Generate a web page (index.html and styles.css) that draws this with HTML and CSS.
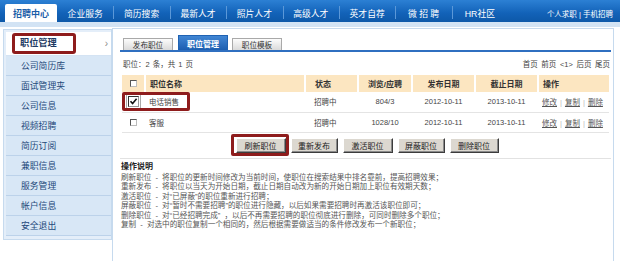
FILE: index.html
```html
<!DOCTYPE html>
<html lang="zh-CN">
<head>
<meta charset="utf-8">
<title>招聘中心 - 职位管理</title>
<link rel="stylesheet" href="styles.css">
</head>
<body>
<header class="top">
  <nav class="nav">
    <a class="nav-home">招聘中心</a>
    <a class="nav-item">企业服务</a>
    <a class="nav-item">简历搜索</a>
    <a class="nav-item">最新人才</a>
    <a class="nav-item">照片人才</a>
    <a class="nav-item">高级人才</a>
    <a class="nav-item">英才自荐</a>
    <a class="nav-item">微 招 聘</a>
    <a class="nav-item">HR社区</a>
    <div class="nav-right">个人求职 | 手机招聘</div>
  </nav>
  <div class="band"></div>
</header>
<div class="page">
  <aside class="side">
    <div class="side-item active"><span class="mark">职位管理</span><span class="arrow">›</span></div>
    <div class="side-item">公司简历库</div>
    <div class="side-item">面试管理夹</div>
    <div class="side-item">公司信息</div>
    <div class="side-item">视频招聘</div>
    <div class="side-item">简历订阅</div>
    <div class="side-item">兼职信息</div>
    <div class="side-item">服务管理</div>
    <div class="side-item">帐户信息</div>
    <div class="side-item">安全退出</div>
  </aside>
  <main class="panel">
    <div class="tabs">
      <div class="tab">发布职位</div>
      <div class="tab on">职位管理</div>
      <div class="tab">职位模板</div>
    </div>
    <div class="info">
      <span class="count">职位：2 条，共 1 页</span>
      <span class="pager">首页 前页 &lt;1&gt; 后页 尾页</span>
    </div>
    <table class="grid">
      <colgroup>
        <col class="c-cb"><col class="c-name"><col class="c-st"><col class="c-vw"><col class="c-d"><col class="c-d"><col class="c-op">
      </colgroup>
      <thead>
        <tr>
          <th class="cbcell"><span class="cb"></span></th>
          <th class="left">职位名称</th>
          <th class="left st">状态</th>
          <th>浏览/应聘</th>
          <th>发布日期</th>
          <th>截止日期</th>
          <th class="left">操作</th>
        </tr>
      </thead>
      <tbody>
        <tr>
          <td class="cbcell rel"><span class="cb checked"><svg viewBox="0 0 9 9" width="9" height="9"><path d="M1.5 4.2 L3.6 6.6 L7.6 1.8" fill="none" stroke="#111" stroke-width="1.6"/></svg></span><div class="rowmark"></div></td>
          <td class="left">电话销售</td>
          <td class="left st">招聘中</td>
          <td>804/3</td>
          <td>2012-10-11</td>
          <td>2013-10-11</td>
          <td class="left ops"><a>修改</a><i>|</i><a>复制</a><i>|</i><a>删除</a></td>
        </tr>
        <tr>
          <td class="cbcell"><span class="cb"></span></td>
          <td class="left">客服</td>
          <td class="left st">招聘中</td>
          <td>1028/10</td>
          <td>2012-10-11</td>
          <td>2013-10-11</td>
          <td class="left ops"><a>修改</a><i>|</i><a>复制</a><i>|</i><a>删除</a></td>
        </tr>
      </tbody>
    </table>
    <div class="btns">
      <span class="hl"><button class="btn w50">刷新职位</button></span>
      <button class="btn w46">重新发布</button>
      <button class="btn w50">激活职位</button>
      <button class="btn w46">屏蔽职位</button>
      <button class="btn w49">删除职位</button>
    </div>
    <div class="help">
      <div class="help-title">操作说明</div>
      <p>刷新职位 - 将职位的更新时间修改为当前时间，使职位在搜索结果中排名靠前，提高招聘效果；</p>
      <p>重新发布 - 将职位以当天为开始日期，截止日期自动改为新的开始日期加上职位有效期天数；</p>
      <p>激活职位 - 对“已屏蔽”的职位重新进行招聘；</p>
      <p>屏蔽职位 - 对“暂时不需要招聘”的职位进行隐藏，以后如果需要招聘时再激活该职位即可；</p>
      <p>删除职位 - 对“已经招聘完成” ，以后不再需要招聘的职位彻底进行删除，可同时删除多个职位；</p>
      <p>复制 - 对选中的职位复制一个相同的，然后根据需要做适当的条件修改发布一个新职位；</p>
    </div>
  </main>
</div>
</body>
</html>
```

FILE: styles.css
```css
* { box-sizing: border-box; margin: 0; padding: 0; }
html, body { width: 620px; height: 261px; overflow: hidden; background: #fff; }
body {
  font-family: "Liberation Sans", "Noto Sans CJK SC", sans-serif;
  font-size: 8px;
  color: #333;
}

/* top navigation */
.nav {
  height: 22px;
  display: flex;
  align-items: flex-end;
  padding-left: 5px;
  background: linear-gradient(#2c80d4, #1262b8 60%, #0d58a8);
}
.nav-home {
  width: 52px;
  height: 18px;
  background: #fff;
  color: #1b5ea8;
  font-weight: bold;
  font-size: 9px;
  display: flex;
  align-items: center;
  justify-content: center;
  border-radius: 2px 2px 0 0;
}
.nav-item {
  width: 56.4px;
  height: 18px;
  display: flex;
  align-items: center;
  justify-content: center;
  color: #fff;
  font-size: 8.8px;
  position: relative;
}
.nav-item + .nav-item::before {
  content: "";
  position: absolute;
  left: 0;
  top: 2px;
  height: 13px;
  border-left: 1px solid #5b98d8;
}
.nav-right {
  margin-left: auto;
  height: 18px;
  padding-right: 7px;
  display: flex;
  align-items: center;
  color: #fff;
  font-size: 7.5px;
}
.band { height: 5px; background: #d2e3f4; }

/* page */
.page {
  display: flex;
  align-items: flex-start;
  margin-top: 1px;
}

/* sidebar */
.side {
  width: 109px;
  margin: 1px 0 0 3px;
  background: #e4eef9;
  border: 1px solid #c6daee;
  padding: 2px 0 3px 2px;
}
.side-item {
  height: 20px;
  display: flex;
  align-items: center;
  padding-left: 15px;
  font-size: 8.8px;
  color: #24497a;
  background: #d8e7f6;
  border-bottom: 1px solid #bcd2ea;
}
.side-item.active {
  height: 24px;
  background: #fff;
  padding-left: 6px;
  padding-right: 3px;
  justify-content: space-between;
  border-bottom: 1px solid #d4e3f3;
}
.mark {
  display: inline-block;
  height: 21px;
  line-height: 15px;
  padding: 0 16px 0 5px;
  border: 3px solid #8e1c1c;
  border-radius: 3px;
  font-weight: bold;
  font-size: 9.2px;
  color: #1d3a63;
}
.arrow { color: #8a8a8a; font-size: 10px; }

/* main panel */
.panel {
  width: 502px;
  height: 240px;
  border: 1px solid #c6daee;
  border-bottom: none;
  padding: 6px 2px 0 7px;
}
.tabs {
  display: flex;
  align-items: flex-end;
  height: 17px;
  padding-left: 3px;
  border-bottom: 2px solid #2f6fc0;
}
.tab {
  width: 50px;
  height: 12px;
  margin-right: 5px;
  border: 1px solid #a9a9a9;
  border-bottom: none;
  background: linear-gradient(#fcfcfc, #dadada);
  display: flex;
  align-items: center;
  justify-content: center;
  font-size: 7.6px;
  color: #333;
}
.tab.on {
  height: 15px;
  margin-right: 4px;
  border-color: #1f62b3;
  background: linear-gradient(#4186d4, #1c5eb0);
  color: #fff;
  font-weight: bold;
  font-size: 8px;
}
.info {
  margin-top: 4px;
  height: 14px;
  display: flex;
  align-items: center;
  justify-content: space-between;
  padding: 0 1px 0 3px;
  font-size: 7.5px;
  color: #444;
}
.count { word-spacing: 1px; }
.pager { word-spacing: 1.5px; }

/* table */
.grid {
  margin: 5px 0 0 2px;
  width: 487px;
  border-collapse: collapse;
  table-layout: fixed;
}
.c-cb { width: 23px; }
.c-name { width: 160px; }
.c-st { width: 53px; }
.c-vw { width: 54px; }
.c-d { width: 63px; }
.c-op { width: 71px; }
.grid th {
  height: 17px;
  background: #fce6c1;
  border-right: 2px solid #fff;
  font-size: 8px;
  font-weight: bold;
  color: #333;
  text-align: center;
  padding: 0;
}
.grid th:last-child { border-right: none; }
.grid td {
  height: 20px;
  border-bottom: 1px solid #e4e4e4;
  font-size: 7.5px;
  color: #444;
  text-align: center;
  padding: 0;
}
.grid .left { text-align: left; padding-left: 4px; }
.grid .st { padding-left: 9px; }
.cbcell { text-align: center; }
.rel { position: relative; }
.cb {
  display: inline-block;
  width: 7px;
  height: 7px;
  border: 1px solid;
  border-color: #555 #bbb #bbb #555;
  background: #fff;
  vertical-align: middle;
}
.cb.checked {
  width: 11px;
  height: 11px;
  border-width: 1.5px;
  border-color: #333 #999 #999 #333;
  outline: 1px solid #aaa;
  outline-offset: 1px;
  display: inline-flex;
  align-items: center;
  justify-content: center;
}
.rowmark {
  position: absolute;
  left: 0;
  top: 0;
  width: 68px;
  height: 19px;
  border: 3px solid #8e1c1c;
  border-radius: 2px;
}
.ops a { color: #555; text-decoration: underline; }
.ops i { font-style: normal; color: #bbb; margin: 0 3px; }

/* buttons */
.btns {
  margin-top: 5px;
  display: flex;
  justify-content: center;
  gap: 5px;
  padding-left: 3px;
  padding-bottom: 5px;
  border-bottom: 1px solid #e2e2e2;
}
.btn {
  height: 15px;
  font-family: "Liberation Sans", "Noto Sans CJK SC", sans-serif;
  font-size: 8px;
  color: #222;
  background: #dcd8d0;
  border: 1px solid;
  border-color: #fff #3c3c3c #3c3c3c #fff;
  box-shadow: inset -1px -1px 0 #8a8a8a;
  display: block;
}
.w50 { width: 50px; }
.w49 { width: 49px; }
.w46 { width: 47px; }
.hl { position: relative; display: block; }
.hl::after {
  content: "";
  position: absolute;
  left: -5px;
  right: -3px;
  top: -4px;
  bottom: -3px;
  border: 3px solid #8e1c1c;
  border-radius: 2px;
}

/* help */
.help { padding: 3px 0 0 1px; }
.help-title {
  height: 9px;
  line-height: 9px;
  font-size: 8px;
  font-weight: bold;
  color: #222;
  margin-bottom: 2.5px;
}
.help p {
  line-height: 9.4px;
  font-size: 7.6px;
  color: #555;
  white-space: nowrap;
  word-spacing: 2px;
}
```
